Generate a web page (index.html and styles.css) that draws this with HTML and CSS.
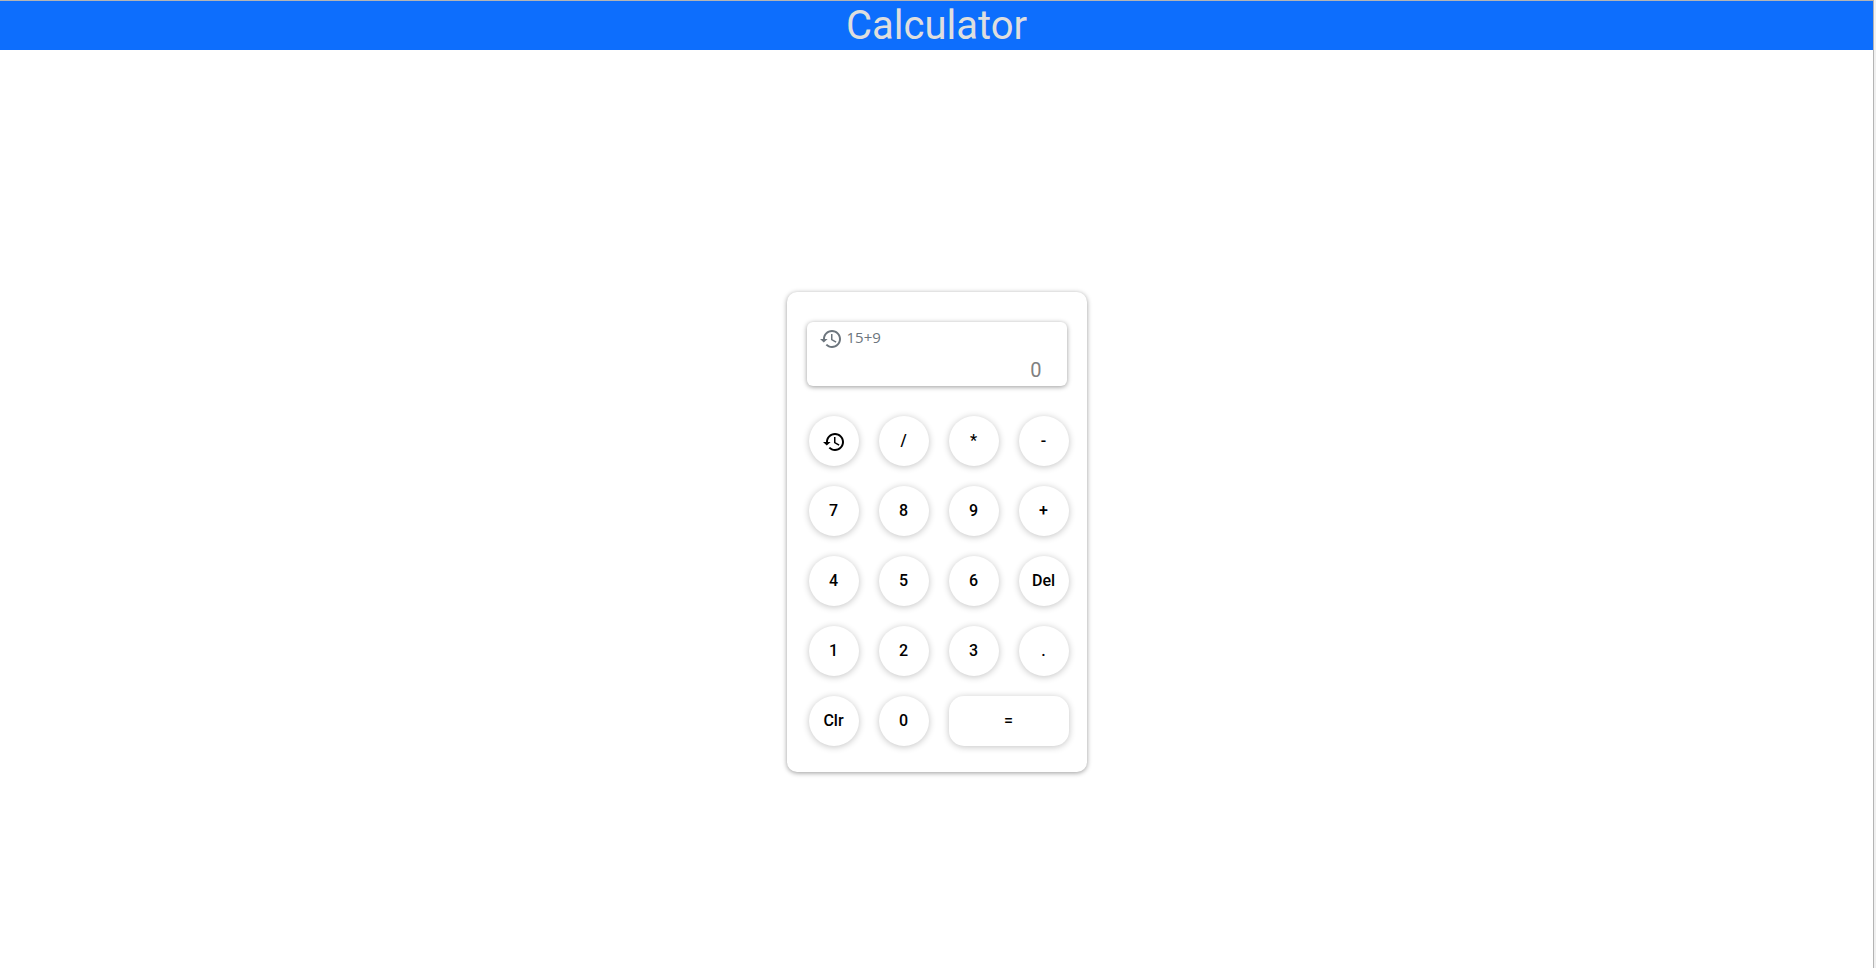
FILE: index.html
```html
<!DOCTYPE html>
<html lang="en">
<head>
<meta charset="utf-8">
<title>Calculator</title>
<link rel="stylesheet" href="styles.css">
</head>
<body>
<svg class="sprite" aria-hidden="true">
  <symbol id="history" viewBox="0 0 24 24">
    <path d="M12 7v6l4.7 2.8.8-1.2-4-2.4V7zM13 3c-4.97 0-9 4.03-9 9H1l3.8 3.6L8.600 12H6c0-3.870 3.130-7 7-7s7 3.130 7 7-3.130 7-7 7c-1.930 0-3.680-.79-4.940-2.060l-1.420 1.420C8.270 19.990 10.510 21 13 21c4.970 0 9-4.030 9-9s-4.030-9-9-9z"/>
  </symbol>
</svg>
<header class="header"><h1 class="title">Calculator</h1></header>
<main class="main">
  <section class="calculator" aria-label="Calculator">
    <div class="display">
      <div class="previous">
        <svg class="icon" aria-hidden="true"><use href="#history"/></svg>
        <span>15+9</span>
      </div>
      <input class="result" type="text" value="0" aria-label="Result" readonly>
    </div>
    <div class="keys">
      <button class="key key-history" type="button" aria-label="History"><svg class="icon" aria-hidden="true"><use href="#history"/></svg></button>
      <button class="key" type="button">/</button>
      <button class="key" type="button">*</button>
      <button class="key" type="button">-</button>
      <button class="key" type="button">7</button>
      <button class="key" type="button">8</button>
      <button class="key" type="button">9</button>
      <button class="key" type="button">+</button>
      <button class="key" type="button">4</button>
      <button class="key" type="button">5</button>
      <button class="key" type="button">6</button>
      <button class="key" type="button">Del</button>
      <button class="key" type="button">1</button>
      <button class="key" type="button">2</button>
      <button class="key" type="button">3</button>
      <button class="key" type="button">.</button>
      <button class="key" type="button">Clr</button>
      <button class="key" type="button">0</button>
      <button class="key key-wide" type="button">=</button>
    </div>
  </section>
</main>
</body>
</html>
```
FILE: styles.css
```css
* { box-sizing: border-box; }
html { background: #f0f0f0; }
body {
  display: flex;
  flex-direction: column;
  min-height: 100vh;
  margin: 0 2px 0 0;
  border-top: 1px solid #b4b4b4;
  border-right: 1px solid #b4b4b4;
  background: #fff;
  font-family: Roboto, sans-serif;
}
.sprite { display: none; }
.header {
  padding: 0 16px;
  background: #0d6efd;
  text-align: center;
}
.title {
  margin: 0;
  color: #dedede;
  font-size: 40px;
  font-weight: 400;
  line-height: 49px;
}
.main {
  display: flex;
  flex: 1;
  align-items: center;
  justify-content: center;
  padding-top: 46px;
}
.calculator {
  width: 300px;
  padding: 30px 20px 26px;
  border-radius: 10px;
  background: #fff;
  box-shadow: 0 1px 5px rgba(0, 0, 0, 0.4);
}
.display {
  padding: 5px 12px 0;
  border-radius: 6px;
  box-shadow: 0 1px 5px rgba(0, 0, 0, 0.4);
}
.previous {
  display: flex;
  gap: 4px;
  color: #6c757d;
  font-family: "Open Sans", "Noto Sans", sans-serif;
  font-size: 15px;
  line-height: 20px;
}
.icon {
  width: 24px;
  height: 24px;
  fill: currentColor;
}
.result {
  display: block;
  width: 100%;
  height: 35px;
  padding: 2px 13px 0 12px;
  border: 0;
  background: none;
  color: #808080;
  font: 400 20px/32px Roboto, sans-serif;
  text-align: right;
}
.keys {
  display: grid;
  grid-template-columns: repeat(4, 50px);
  gap: 20px;
  margin: 30px 0 0 2px;
}
.key {
  display: flex;
  align-items: center;
  justify-content: center;
  height: 50px;
  padding: 0;
  border: 0;
  border-radius: 25px;
  background: #fff;
  box-shadow: 0 1px 7px rgba(0, 0, 0, 0.24);
  color: #000;
  font: 500 16px/24px Roboto, sans-serif;
}
.key-history { padding-top: 2px; }
.key-wide {
  grid-column: span 2;
  border-radius: 15px;
}
```
